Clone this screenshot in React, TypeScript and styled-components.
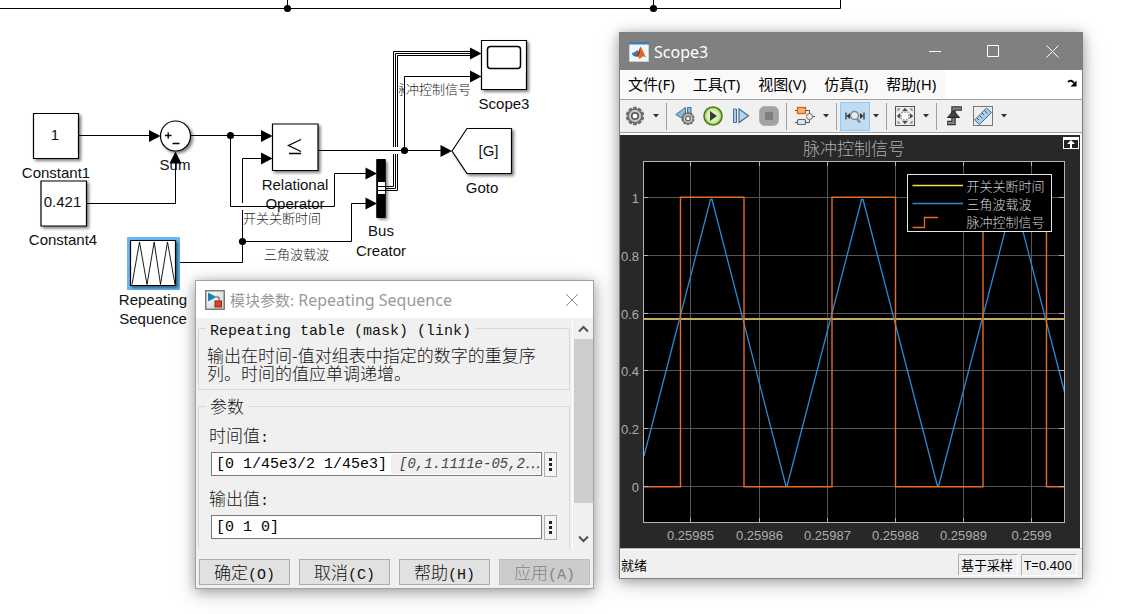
import React from "react";
import styled, { createGlobalStyle } from "styled-components";

const UI = `"Noto Sans", "Noto Sans CJK SC", sans-serif`;
const SIM = `"Liberation Sans", "Noto Sans CJK SC", sans-serif`;
const SONG = `"Noto Sans CJK SC", sans-serif`;
const MONO = `"Liberation Mono", "Noto Sans CJK SC", monospace`;

const GlobalStyle = createGlobalStyle`
  *, *::before, *::after { box-sizing: border-box; }
  body { margin: 0; background: #fff; color: #000; font-family: ${UI}; }
  button { font: inherit; color: inherit; padding: 0; border: 0; background: none; }
`;

const Desktop = styled.main`
  position: relative;
  width: 100%;
  min-height: 100vh;
  overflow: hidden;
`;

/* ---------- Block diagram ---------- */

const Diagram = styled.svg`
  display: block;
  font-family: ${SIM};
`;

const Wire = styled.path`
  fill: none;
  stroke: #000;
`;

const Halo = styled.path`
  fill: none;
  stroke: #fff;
`;

const BlockShape = styled.path`
  fill: #fff;
  stroke: #000;
  stroke-width: 1.2;
  filter: drop-shadow(2px 2px 1.5px rgba(0, 0, 0, 0.5));
`;

const BlockText = styled.text`
  font-size: 15px;
  text-anchor: middle;
  fill: #111;
`;

const SignalText = styled.text`
  font-size: 13px;
  font-weight: 300;
  fill: #222;
`;

const box = (x: number, y: number, w: number, h: number) => `M${x} ${y}h${w}v${h}h${-w}z`;
const arrowRight = (x: number, y: number) => `M${x} ${y}l-11.5 -6v12z`;

const blockLabels: [string, number, number][] = [
  ["1", 55, 140],
  ["0.421", 62.5, 207],
  ["[G]", 488.5, 156],
  ["Constant1", 56, 178],
  ["Constant4", 63, 245],
  ["Sum", 175, 170],
  ["Relational", 295, 190],
  ["Operator", 295, 209],
  ["Bus", 381, 236],
  ["Creator", 381, 256],
  ["Scope3", 504, 109],
  ["Goto", 482, 193],
  ["Repeating", 153, 305],
  ["Sequence", 153, 324],
];

const signalLabels: [string, number, number][] = [
  ["脉冲控制信号", 393, 94],
  ["开关关断时间", 243, 223],
  ["三角波载波", 264, 259],
];

const junctions: [number, number][] = [
  [287.5, 8.5], [653.5, 8.5], [230.5, 135.5], [242.5, 241.5], [404.5, 150.5],
];

const arrows: [number, number][] = [
  [160.5, 136], [272.5, 136], [272.5, 158.5], [377, 173.5], [377, 203.5],
  [452, 151], [481.5, 53.5], [481.5, 76.5],
];

function BlockDiagram() {
  return (
    <Diagram width="843" height="340" viewBox="0 0 843 340" role="img" aria-label="Simulink block diagram">
      {blockLabels.slice(3).map(([t, x, y]) => <BlockText key={t} x={x} y={y}>{t}</BlockText>)}
      {signalLabels.map(([t, x, y]) => <SignalText key={t} x={x} y={y}>{t}</SignalText>)}
      <Wire d="M0 8.5H840.5V0M287.5 8V0M653.5 8V0" />
      <Halo d="M386 188.5H395.5V53.5H472" strokeWidth="7" />
      <Wire d="M386 186.5H393.5V51.5H471M386 188.5H395.5V53.5H471M386 190.5H397.5V55.5H471" />
      <Wire d="M176 262.5H242.5V158.5H264M242.5 241.5H351.5V203.5H368" />
      <Halo d="M241 206.500H244M392 150.500H399" strokeWidth="7" />
      <Wire d="M79 135.5H152M87 203.5H175.5V160M190 135.5H264M230.5 135.5V206.5H334.5V173.5H368" />
      <Wire d="M318 150.5H444M404.5 150.5V76.5H472" />
      <path d="M175.5 151.5l-6 12h12z" />
      {junctions.map(([x, y]) => <circle key={`${x}-${y}`} cx={x} cy={y} r="3.6" />)}
      <rect x="127" y="237" width="53" height="53" fill="#63baf7" />
      <BlockShape d={box(33.5, 113.5, 45, 45)} />
      <BlockShape d={box(41, 181, 45.5, 45)} />
      <BlockShape d={box(272.5, 124, 45.5, 46.5)} />
      <BlockShape d={box(481.5, 40.5, 45, 49)} />
      <BlockShape d={box(130.5, 240.5, 45, 45)} />
      <BlockShape d="M452 151L467 128.5H511.5V173.5H467z" />
      <BlockShape d="M160.5 136a15 15 0 1 0 30 0a15 15 0 1 0 -30 0z" />
      <BlockShape d={box(377, 160, 8, 57)} />
      <rect x="376.5" y="159" width="9" height="59" />
      <path d="M378 182h7v4h-7zM378 187h7v3h-7zM378 191h7v3h-7z" fill="#fff" />
      <rect x="487.5" y="46.5" width="33" height="22" rx="3" fill="none" stroke="#000" strokeWidth="1.5" />
      <Wire d="M165 135.5h6.5M168.2 132.2v6.5M172.5 143.5h7M301 139.5l-12.5 6l12.5 6M289 153.5h12" strokeWidth="1.3" />
      <Wire d="M132 284.5L139.5 242L147 284.5L154.2 242L160.5 284.5L167.5 242L175 284.5" strokeWidth="0.9" />
      {arrows.map(([x, y]) => <path key={`${x}-${y}`} d={arrowRight(x, y)} />)}
      {blockLabels.slice(0, 3).map(([t, x, y]) => <BlockText key={t} x={x} y={y}>{t}</BlockText>)}
    </Diagram>
  );
}

/* ---------- Windows ---------- */

const Window = styled.section<{ $x: number; $y: number; $w: number; $border: string }>`
  position: absolute;
  left: ${(p) => p.$x}px;
  top: ${(p) => p.$y}px;
  width: ${(p) => p.$w}px;
  border: 1px solid ${(p) => p.$border};
  background: #f0f0f0;
  box-shadow: 0 2px 12px rgba(0, 0, 0, 0.35), 0 6px 24px rgba(0, 0, 0, 0.12);
`;

const TitleBar = styled.header<{ $dark?: boolean }>`
  display: flex;
  align-items: center;
  height: 37px;
  padding-left: 9px;
  background: ${(p) => (p.$dark ? "#808080" : "#fff")};
  color: ${(p) => (p.$dark ? "#fff" : "#999")};
`;

const Title = styled.h1`
  flex: 1;
  margin: 0 0 0 5px;
  font-size: 16px;
  line-height: 22px;
  font-weight: 400;
`;

const TitlePrefix = styled.span`
  font-size: 15px;
`;

const CaptionButton = styled.button<{ $w: number }>`
  display: grid;
  place-items: center;
  width: ${(p) => p.$w}px;
  height: 36px;
`;

/* ---------- Parameter dialog ---------- */

const DialogBody = styled.div`
  display: flex;
  height: 231px;
  overflow: hidden;
`;

const Groups = styled.div`
  flex: 1;
  min-width: 0;
  padding: 1px 2px 0;
  border-right: 1px solid #fff;
  font-family: ${SONG};
  font-size: 17px;
  font-weight: 300;
  line-height: 18px;
  color: #111;
`;

const Group = styled.fieldset`
  min-width: 0;
  margin: 0 0 7px;
  padding: 0;
  border: 1px solid #d9d9d9;
`;

const Legend = styled.legend`
  height: 18px;
  margin-left: 7px;
  padding: 0 4px;
`;

const Latin = styled.span`
  font-family: ${MONO};
  font-size: 15px;
  font-weight: 400;
  line-height: 1;
`;

const Description = styled.p`
  margin: 0;
  padding: 9px 15px 7px 8px;
`;

const Fields = styled.div`
  padding: 11px 12px 20px 10px;
`;

const FieldLabel = styled.label`
  display: block;
  height: 18px;
  margin-bottom: 8px;
`;

const FieldRow = styled.div`
  display: flex;
  gap: 2px;
  height: 25px;
  margin: 0 0 12px 2px;
`;

const FieldBox = styled.div`
  display: flex;
  flex: 1;
  min-width: 0;
  height: 24px;
  padding: 1px;
  border: 1px solid #7a7a7a;
  background: #fff;
`;

const FieldInput = styled.input`
  flex: 1;
  min-width: 0;
  padding: 0 0 0 3px;
  border: 0;
  outline: 0;
  background: none;
  font-family: ${MONO};
  font-size: 15px;
  color: #000;
`;

const EvaluatedValue = styled.output`
  flex: none;
  width: 149px;
  padding-left: 8px;
  background: #f0f0f0;
  font-family: ${MONO};
  font-size: 14px;
  font-style: italic;
  font-weight: 400;
  line-height: 20px;
  color: #444;
  white-space: nowrap;
`;

const MoreButton = styled.button`
  display: grid;
  flex: none;
  place-items: center;
  width: 13px;
  border: 1px solid #adadad;
  background: #f4f4f4;
`;

const ScrollBar = styled.div`
  display: flex;
  flex-direction: column;
  align-items: center;
  width: 20px;
`;

const ScrollArrow = styled.button`
  display: grid;
  place-items: center;
  height: 21px;
`;

const ScrollThumb = styled.div`
  width: 19px;
  height: 164px;
  margin-bottom: auto;
  background: #cdcdcd;
`;

const DialogFooter = styled.footer`
  display: flex;
  gap: 9px;
  padding: 10px 3px 3px;
`;

const DialogButton = styled.button`
  flex: 1;
  height: 26px;
  border: 1px solid #adadad;
  background: #e1e1e1;
  font-family: ${SONG};
  font-size: 17px;
  font-weight: 300;
  line-height: 24px;
  color: #111;
  white-space: nowrap;
  &:disabled { background: #ccc; border-color: #bfbfbf; color: #858585; }
`;

const Dots = () => (
  <svg width="5" height="15" viewBox="0 0 5 15" aria-hidden="true">
    <path d="M1 1h3v3h-3zM1 6h3v3h-3zM1 11h3v3h-3z" fill="#222" />
  </svg>
);

const Chevron = ({ d }: { d: string }) => (
  <svg width="11" height="8" viewBox="0 0 11 8" fill="none" stroke="#505050" strokeWidth="2" aria-hidden="true">
    <path d={d} />
  </svg>
);

const BlockIcon = () => (
  <svg width="20" height="20" viewBox="0 0 20 20" aria-hidden="true">
    <defs>
      <linearGradient id="tile" x2="1" y2="1"><stop stopColor="#fff" /><stop offset="1" stopColor="#cfcfcf" /></linearGradient>
    </defs>
    <rect x="0.75" y="0.75" width="18.5" height="18.5" fill="url(#tile)" stroke="#7b7b7b" strokeWidth="1.5" />
    <path d="M11 7h3v4" fill="none" stroke="#555" />
    <path d="M3 2.5v9l8.5-4.5z" fill="#1f7fb8" />
    <rect x="10" y="11" width="6.5" height="6" fill="#d9441e" stroke="#8d2a12" />
  </svg>
);

const actions = [
  ["确定", "(O)"],
  ["取消", "(C)"],
  ["帮助", "(H)"],
  ["应用", "(A)"],
];

function ParameterDialog() {
  return (
    <Window $x={195} $y={280} $w={399} $border="#a3a3a3" aria-label="模块参数">
      <TitleBar>
        <BlockIcon />
        <Title><TitlePrefix>模块参数:</TitlePrefix> Repeating Sequence</Title>
        <CaptionButton $w={43} aria-label="关闭">
          <svg width="14" height="14" viewBox="0 0 14 14" stroke="#8a8a8a"><path d="M1 1l12 12M13 1L1 13" /></svg>
        </CaptionButton>
      </TitleBar>
      <DialogBody>
        <Groups>
          <Group>
            <Legend><Latin>Repeating table (mask) (link)</Latin></Legend>
            <Description>输出在时间-值对组表中指定的数字的重复序列。时间的值应单调递增。</Description>
          </Group>
          <Group>
            <Legend>参数</Legend>
            <Fields>
              <FieldLabel htmlFor="time">时间值<Latin>:</Latin></FieldLabel>
              <FieldRow>
                <FieldBox>
                  <FieldInput id="time" defaultValue="[0 1/45e3/2 1/45e3]" />
                  <EvaluatedValue htmlFor="time">[0,1.1111e-05,2⋯</EvaluatedValue>
                </FieldBox>
                <MoreButton aria-label="时间值选项"><Dots /></MoreButton>
              </FieldRow>
              <FieldLabel htmlFor="out">输出值<Latin>:</Latin></FieldLabel>
              <FieldRow>
                <FieldBox><FieldInput id="out" defaultValue="[0 1 0]" /></FieldBox>
                <MoreButton aria-label="输出值选项"><Dots /></MoreButton>
              </FieldRow>
            </Fields>
          </Group>
        </Groups>
        <ScrollBar>
          <ScrollArrow aria-label="向上滚动"><Chevron d="M1 6.5L5.5 2L10 6.5" /></ScrollArrow>
          <ScrollThumb />
          <ScrollArrow aria-label="向下滚动"><Chevron d="M1 1.5L5.5 6L10 1.5" /></ScrollArrow>
        </ScrollBar>
      </DialogBody>
      <DialogFooter>
        {actions.map(([text, key]) => (
          <DialogButton key={text} disabled={text === "应用"}>{text}<Latin>{key}</Latin></DialogButton>
        ))}
      </DialogFooter>
    </Window>
  );
}

/* ---------- Scope window ---------- */

const MenuBar = styled.nav`
  display: flex;
  align-items: center;
  height: 29px;
  padding: 0 4px 2px 8px;
  background: linear-gradient(to right, #f9f9f9 326px, #fff 326px);
`;

const MenuItem = styled.button`
  margin-right: 18px;
  font-size: 15px;
  line-height: 24px;
  white-space: nowrap;
`;

const DockButton = styled.button`
  display: grid;
  margin-left: auto;
`;

const ToolBar = styled.div`
  display: flex;
  align-items: center;
  height: 34px;
  padding-left: 1px;
  border-top: 1px solid #a0a0a0;
  border-bottom: 1px solid #a0a0a0;
`;

const ToolButton = styled.button<{ $on?: boolean }>`
  display: grid;
  place-items: center;
  width: 28px;
  height: 27px;
  background: ${(p) => (p.$on ? "#c0dcf3" : "none")};
  box-shadow: ${(p) => (p.$on ? "0 0 0 1px #90c8f6" : "none")};
`;

const CaretButton = styled.button`
  display: grid;
  place-items: center;
  width: 14px;
  height: 27px;
`;

const Separator = styled.span`
  width: 1px;
  height: 27px;
  margin: 0 4px 0 3px;
  background: #a0a0a0;
`;

const PlotFrame = styled.div`
  padding: 2px 2px 0 0;
  background: #fafafa;
`;

const Plot = styled.svg`
  display: block;
  width: 100%;
  height: auto;
  background: #282828;
  font-family: ${SIM};
  font-size: 13px;
  fill: #adadad;
`;

const Grid = styled.path`
  fill: none;
  stroke: #565656;
`;

const Trace = styled.path<{ $color: string; $w?: number }>`
  fill: none;
  stroke: ${(p) => p.$color};
  stroke-width: ${(p) => p.$w ?? 1};
`;

const LegendText = styled.text`
  font-weight: 300;
  fill: #d4d4d4;
`;

const StatusBar = styled.footer`
  display: flex;
  align-items: center;
  gap: 3px;
  height: 30px;
  padding: 2px 5px 0 1px;
  border-top: 1px solid #b0b0b0;
  box-shadow: inset 0 1px #fff;
  font-size: 13px;
  line-height: 20px;
`;

const StatusText = styled.span`
  flex: 1;
`;

const StatusCell = styled.span<{ $w: number }>`
  width: ${(p) => p.$w}px;
  height: 22px;
  padding-left: 2px;
  border: 1px solid;
  border-color: #b0b0b0 #fff #fff #b0b0b0;
  white-space: nowrap;
`;

const MatlabIcon = () => (
  <svg width="20" height="20" viewBox="0 0 20 20" aria-hidden="true">
    <rect x="0.5" y="0.5" width="19" height="19" fill="#f4f7fa" stroke="#c9d2da" />
    <path d="M0 0h20v2.5H0z" fill="#3f7fb0" />
    <path d="M2.500 11.500l4-2l2-1.500l1 2.500l-2.500 3.500l-2 .5z" fill="#2b7fc0" />
    <path d="M6.500 14.500l2.500-3.500l2.500-6.500l2 3.500l3.500 7.500l-3-1.200l-3.500 2.700l-1.500-2.500z" fill="#e0671e" />
    <path d="M6.500 14.500l2.500-3.500l2.500-6.500l-.8 6.500l-2 3.500z" fill="#a52a10" />
  </svg>
);

const gearTeeth = Array.from({ length: 10 }, (_, i) => i * 36);

const Gear = ({ x, y, s }: { x: number; y: number; s: number }) => (
  <g transform={`translate(${x} ${y}) scale(${s})`}>
    {gearTeeth.map((a) => (
      <rect key={a} x="-2" y="-9.2" width="4" height="4" rx="1" fill="#6d6d6d" transform={`rotate(${a})`} />
    ))}
    <circle r="6.8" fill="#c9c9c9" stroke="#6d6d6d" strokeWidth="1.3" />
    <circle r="3.2" fill="#fff" stroke="#5f5f5f" strokeWidth="1.8" />
  </g>
);

const Glyph = ({ children }: { children: React.ReactNode }) => (
  <svg width="20" height="20" viewBox="0 0 20 20" aria-hidden="true">{children}</svg>
);

const Caret = ({ label }: { label: string }) => (
  <CaretButton aria-label={label}>
    <svg width="6" height="4" viewBox="0 0 6 4"><path d="M0 0h6L3 3.5z" fill="#333" /></svg>
  </CaretButton>
);

function ScopeToolBar() {
  return (
    <ToolBar role="toolbar">
      <ToolButton aria-label="配置"><Glyph><Gear x={10} y={10} s={1} /></Glyph></ToolButton>
      <Caret label="配置选项" />
      <Separator />
      <ToolButton aria-label="步退">
        <Glyph>
          <path d="M0.8 8.5L10.5 1.5v13z" fill="#8fbbd9" stroke="#43718f" />
          <path d="M12.5 1.5h3.5v9h-3.5z" fill="#8db9d8" stroke="#43718f" />
          <Gear x={13} y={12.5} s={0.72} />
        </Glyph>
      </ToolButton>
      <ToolButton aria-label="运行">
        <Glyph>
          <defs>
            <radialGradient id="run"><stop stopColor="#f7fce8" /><stop offset="0.6" stopColor="#dcefb8" /><stop offset="1" stopColor="#9ccb4e" /></radialGradient>
          </defs>
          <circle cx="10" cy="10" r="9" fill="url(#run)" stroke="#4a7a1c" strokeWidth="1.6" />
          <path d="M7 5l7 5l-7 5z" fill="#3a3a3a" />
        </Glyph>
      </ToolButton>
      <ToolButton aria-label="步进">
        <Glyph>
          <path d="M2.5 3h3v13.5h-3z" fill="#a9cde6" stroke="#43718f" />
          <path d="M8 3v13.5l9.5-6.7z" fill="#b9d7ec" stroke="#43718f" strokeWidth="1.2" />
        </Glyph>
      </ToolButton>
      <ToolButton aria-label="停止">
        <Glyph>
          <rect x="0.5" y="0.5" width="19" height="19" rx="5" fill="#a3a3a3" stroke="#b0b0b0" />
          <rect x="6" y="6" width="8" height="8" fill="#7e7e7e" />
        </Glyph>
      </ToolButton>
      <Separator />
      <ToolButton aria-label="显示模块">
        <Glyph>
          <path d="M0 4.5h2M10 4.5h4.5v3M0 16.5h2M10 16.5h4.5v-3M17.5 10.5H20" fill="none" stroke="#555" />
          <rect x="2.5" y="1.5" width="8" height="6" fill="#f7b56c" stroke="#cf6518" strokeWidth="1.3" />
          <rect x="2.5" y="13.5" width="8" height="5" rx="1" fill="#e4e4e4" stroke="#666" strokeWidth="1.2" />
          <circle cx="14.5" cy="10.5" r="3" fill="#eee" stroke="#666" />
        </Glyph>
      </ToolButton>
      <Caret label="模块选项" />
      <Separator />
      <ToolButton $on aria-label="缩放 X">
        <Glyph>
          <path d="M1 6.500v7M19 6.500v7" stroke="#333" strokeWidth="1.3" />
          <path d="M1.500 10L5 7v6zM18.500 10L15 7v6z" fill="#333" />
          <circle cx="9.500" cy="9.500" r="4" fill="#e3edf4" stroke="#858585" strokeWidth="1.5" />
          <path d="M12 13l3 3.500" stroke="#858585" strokeWidth="2.2" />
        </Glyph>
      </ToolButton>
      <Caret label="缩放选项" />
      <Separator />
      <ToolButton aria-label="按比例缩放">
        <Glyph>
          <rect x="0.5" y="0.5" width="19" height="19" fill="#ececec" stroke="#555" />
          <path d="M10 1.800l3 3.500H7zM10 18.200l3-3.500H7zM1.800 10l3.500-3v6zM18.200 10l-3.500-3v6z" fill="#4a4a4a" />
          <path d="M2.500 2.500h3l-3 3zM17.500 2.500h-3l3 3zM2.500 17.500h3l-3-3zM17.500 17.500h-3l3-3z" fill="#777" />
          <rect x="6.5" y="6.5" width="7" height="7" fill="#fff" stroke="#999" strokeDasharray="1.5 1.5" />
        </Glyph>
      </ToolButton>
      <Caret label="比例选项" />
      <Separator />
      <ToolButton aria-label="触发">
        <Glyph>
          <path d="M2 17h6.5V2.5H17" fill="none" stroke="#333" strokeWidth="4.5" />
          <path d="M2.5 17h6V2.5h8" fill="none" stroke="#858585" strokeWidth="2" />
          <path d="M8.5 4.5L2.5 11.5h12z" fill="#444" stroke="#222" />
        </Glyph>
      </ToolButton>
      <ToolButton aria-label="测量">
        <Glyph>
          <rect x="0.5" y="0.5" width="19" height="19" fill="#efefef" stroke="#777" />
          <path d="M1.5 14L13.5 2L18.5 6.5L6.5 18.5z" fill="#a9cfe9" stroke="#3d6d8d" />
          <path d="M4 12l2 2M6.5 9.5l3 3M9 7l2 2M11.5 4.5l3 3" stroke="#2e5a78" />
        </Glyph>
      </ToolButton>
      <Caret label="测量选项" />
    </ToolBar>
  );
}

const gridX = [70.5, 139.5, 207.5, 275.5, 343.5, 411.5];
const gridY = [351.5, 293.5, 235.5, 178.5, 120.5, 62.5];
const xTicks = ["0.25985", "0.25986", "0.25987", "0.25988", "0.25989", "0.2599"];
const yTicks = ["0", "0.2", "0.4", "0.6", "0.8", "1"];
const legendRows: [string, number][] = [["开关关断时间", 56], ["三角波载波", 74], ["脉冲控制信号", 92]];

function ScopePlot() {
  return (
    <Plot viewBox="0 0 460 413" role="img" aria-label="脉冲控制信号">
      <rect x="23.5" y="26.5" width="421" height="361" fill="#000" />
      {gridX.map((x) => <Grid key={x} d={`M${x} 27V387`} />)}
      {gridY.map((y) => <Grid key={y} d={`M24 ${y}H444`} />)}
      <Trace $color="#c2ae58" $w={1.8} d="M24 184H444" />
      <Trace $color="#2b8ad8" $w={1.3} d="M24 321L90.5 64.5H92L165.8 350.5H167.2L241.6 64.5H243L317.3 350.5H318.7L393.3 64.5H394.7L444.5 257" />
      <Trace $color="#e56c25" $w={1.4} d="M24 351.7H60.5V62.3H124V351.7H212V62.3H275.5V351.7H363V62.3H426.5V351.7H444" />
      <rect x="23.5" y="26.5" width="421" height="361" fill="none" stroke="#b3b3b3" />
      {gridX.map((x) => <path key={x} d={`M${x} 27v4M${x} 387v-4`} stroke="#b3b3b3" />)}
      {gridY.map((y) => <path key={y} d={`M24 ${y}h4M444 ${y}h-5`} stroke="#b3b3b3" />)}
      <text x="234" y="20" fontSize="17" fontWeight="300" textAnchor="middle">脉冲控制信号</text>
      {xTicks.map((t, i) => <text key={t} x={gridX[i]} y="405" textAnchor="middle">{t}</text>)}
      {yTicks.map((t, i) => <text key={t} x="19" y={gridY[i] + 5.5} textAnchor="end">{t}</text>)}
      <rect x="287.5" y="39.5" width="144" height="57" fill="#000" stroke="#e6e6e6" />
      <Trace $color="#f4e04d" $w={1.3} d="M292.5 50.5H343" />
      <Trace $color="#2b8ad8" $w={1.3} d="M292.5 68.5H343" />
      <Trace $color="#e56c25" $w={1.3} d="M292.5 92.5H304.5V82.5H318" />
      {legendRows.map(([t, y]) => <LegendText key={t} x="346.5" y={y}>{t}</LegendText>)}
      <rect x="443.5" y="2.5" width="15" height="11" fill="#222" stroke="#fff" />
      <path d="M444 4h14" stroke="#fff" strokeWidth="2" />
      <path d="M451 5l-4 4h3v4h2v-4h3z" fill="#fff" />
    </Plot>
  );
}

const menus = ["文件(F)", "工具(T)", "视图(V)", "仿真(I)", "帮助(H)"];

function ScopeWindow() {
  return (
    <Window $x={619} $y={32} $w={464} $border="#7f7f7f" aria-label="Scope3">
      <TitleBar $dark>
        <MatlabIcon />
        <Title>Scope3</Title>
        <CaptionButton $w={58} aria-label="最小化">
          <svg width="13" height="13" viewBox="0 0 13 13" stroke="#fff"><path d="M0 6.5h12" /></svg>
        </CaptionButton>
        <CaptionButton $w={58} aria-label="最大化">
          <svg width="13" height="13" viewBox="0 0 13 13" stroke="#fff" fill="none"><path d="M0.5 0.5h11v11h-11z" /></svg>
        </CaptionButton>
        <CaptionButton $w={60} aria-label="关闭">
          <svg width="13" height="13" viewBox="0 0 13 13" stroke="#fff"><path d="M0.5 0.5l12 12M12.5 0.5l-12 12" /></svg>
        </CaptionButton>
      </TitleBar>
      <MenuBar>
        {menus.map((m) => <MenuItem key={m}>{m}</MenuItem>)}
        <DockButton aria-label="停靠">
          <svg width="11" height="9" viewBox="0 0 11 9"><path d="M1 3Q4 0 7 4" fill="none" stroke="#000" strokeWidth="1.8" /><path d="M9.5 1.5V7.5H3.5z" /></svg>
        </DockButton>
      </MenuBar>
      <ScopeToolBar />
      <PlotFrame><ScopePlot /></PlotFrame>
      <StatusBar>
        <StatusText>就绪</StatusText>
        <StatusCell $w={60}>基于采样</StatusCell>
        <StatusCell $w={56}>T=0.400</StatusCell>
      </StatusBar>
    </Window>
  );
}

export default function App() {
  return (
    <Desktop>
      <GlobalStyle />
      <BlockDiagram />
      <ParameterDialog />
      <ScopeWindow />
    </Desktop>
  );
}
